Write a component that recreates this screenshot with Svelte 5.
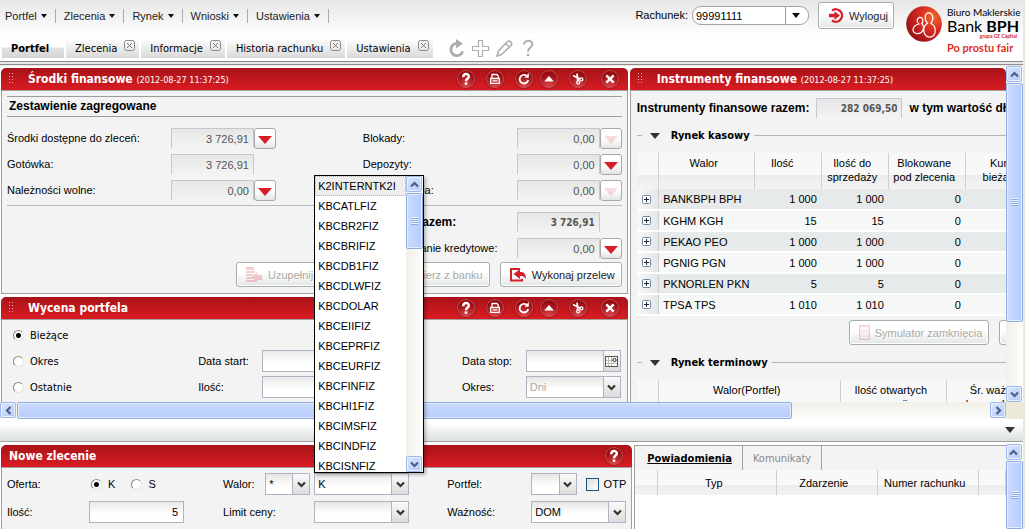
<script lang="ts">
	const menu = ['Portfel', 'Zlecenia', 'Rynek', 'Wnioski', 'Ustawienia']
	const tabs = ['Portfel', 'Zlecenia', 'Informacje', 'Historia rachunku', 'Ustawienia']
	let activeTab = $state('Portfel')

	const panelTools = [
		{ icon: 'help', label: 'Pomoc' },
		{ icon: 'print', label: 'Drukuj' },
		{ icon: 'refresh', label: 'Odśwież' },
		{ icon: 'up', label: 'Zwiń' },
		{ icon: 'cut', label: 'Odepnij' },
		{ icon: 'close', label: 'Zamknij' },
	]

	const funds = [
		{ id: 'srodki', label: 'Środki dostępne do zleceń:', value: '3 726,91', more: true, off: false },
		{ id: 'blokady', label: 'Blokady:', value: '0,00', more: true, off: true },
		{ id: 'gotowka', label: 'Gotówka:', value: '3 726,91', more: false, off: false },
		{ id: 'depozyty', label: 'Depozyty:', value: '0,00', more: true, off: false },
		{ id: 'naleznosci', label: 'Należności wolne:', value: '0,00', more: true, off: false },
		{ id: 'zobowiazania', label: 'Zobowiązania:', value: '0,00', more: true, off: true },
	]

	const positions = [
		['BANKBPH BPH', '1 000', '1 000', '0'],
		['KGHM KGH', '15', '15', '0'],
		['PEKAO PEO', '1 000', '1 000', '0'],
		['PGNIG PGN', '1 000', '1 000', '0'],
		['PKNORLEN PKN', '5', '5', '0'],
		['TPSA TPS', '1 010', '1 010', '0'],
	]

	const symbols = [
		'K2INTERNTK2I', 'KBCATLFIZ', 'KBCBR2FIZ', 'KBCBRIFIZ', 'KBCDB1FIZ',
		'KBCDLWFIZ', 'KBCDOLAR', 'KBCEIIFIZ', 'KBCEPRFIZ', 'KBCEURFIZ',
		'KBCFINFIZ', 'KBCHI1FIZ', 'KBCIMSFIZ', 'KBCINDFIZ', 'KBCISNFIZ',
	]

	let valuation = $state('Bieżące')
	let side = $state('K')
	let symbol = $state('K')
</script>

{#snippet chevron(dir)}
	<svg class="chevron {dir}" width="9" height="9" viewBox="0 0 9 9">
		<path d="M1 2.5 L4.5 6 L8 2.5" fill="none" stroke="currentColor" stroke-width="2.2" />
	</svg>
{/snippet}

{#snippet glyph(name)}
	<svg width="18" height="18" viewBox="0 0 18 18" fill="none" stroke="#fff" stroke-width="1.8">
		{#if name === 'help'}
			<path d="M6.2 7.2 C6.2 3 12 3.2 11.8 6.6 C11.7 8.6 9 8.6 9 11.2" stroke-width="2.4" />
			<path d="M9 12.4 V14.8" stroke-width="2.6" />
		{:else if name === 'print'}
			<path d="M6 8 V4.5 H11 L12.2 6 V8 M4.7 8.5 H13.3 V13.3 H4.7 Z M6.5 10.9 H11.5" stroke-width="1.3" />
		{:else if name === 'refresh'}
			<path d="M11.4 5.6 A4.3 4.3 0 1 0 13.2 10" />
			<path d="M9.4 7.8 H13.8 V3 Z" fill="#fff" stroke="none" />
		{:else if name === 'up'}
			<path d="M4.2 11.4 L9 6 L13.8 11.4 Z" fill="#fff" stroke="none" />
		{:else if name === 'cut'}
			<path d="M4 5.5 L11 9 M8 3.6 L8.8 11" stroke-width="1.8" />
			<circle cx="12.4" cy="9.4" r="1.5" stroke-width="1.3" />
			<circle cx="9.2" cy="12.4" r="1.5" stroke-width="1.3" />
		{:else}
			<path d="M5.3 5.3 L12.7 12.7 M12.7 5.3 L5.3 12.7" stroke-width="2.4" />
		{/if}
	</svg>
{/snippet}

{#snippet tools()}
	<div class="tools">
		{#each panelTools as t}
			<button class="tool" aria-label={t.label}>{@render glyph(t.icon)}</button>
		{/each}
	</div>
{/snippet}

{#snippet grip()}
	<svg class="grip" width="6" height="12" viewBox="0 0 6 12" fill="#f0b0b2">
		{#each [0, 3, 6, 9] as y}
			<rect x="0" {y} width="1" height="1" />
			<rect x="3" {y} width="1" height="1" />
		{/each}
	</svg>
{/snippet}

{#snippet stack()}
	<svg width="17" height="16" viewBox="0 0 17 16" fill="#d4202a">
		<path d="M0 0 H8 V3 H0 Z M0 4 H9 V6 H0 Z M0 7 H7 V9 H0 Z M0 10 H8 V12 H0 Z M0 13 H10 V15 H0 Z" />
		<path d="M6 10 L11 5 V8 H16 V13 H11 V15 Z" />
	</svg>
{/snippet}

{#snippet money(id, value, more, off)}
	<div class="money">
		<input {id} class="readout" readonly {value} />
		{#if more}
			<button class="more" disabled={off} aria-label="Szczegóły">
				<svg width="14" height="8" viewBox="0 0 14 8"><path d="M0 0 H14 L7 8 Z" fill="#d81e26" /></svg>
			</button>
		{/if}
	</div>
{/snippet}

{#snippet dropdown(id, label, value, width, off)}
	<div class="dropdown {width}">
		<select {id} aria-label={label} disabled={off}><option>{value}</option></select>
		<span class="arrow">{@render chevron('down')}</span>
	</div>
{/snippet}

<div class="app">
	<header>
		<div class="nav">
			<nav class="menu">
				{#each menu as item}
					<a href="#menu">{item}<i></i></a>
				{/each}
			</nav>
			<div class="tabs">
				{#each tabs as tab, n}
					<div class="tab" class:active={tab === activeTab}>
						<button class="tab-name" onclick={() => (activeTab = tab)}>{tab}</button>
						{#if n > 0}
							<button class="tab-close" aria-label="Zamknij {tab}">
								<svg width="11" height="11" viewBox="0 0 11 11" fill="none" stroke="#8a8a8a">
									<rect x="0.5" y="0.5" width="10" height="10" rx="2" />
									<path d="M3 3 L8 8 M8 3 L3 8" stroke="#777" />
								</svg>
							</button>
						{/if}
					</div>
				{/each}
				<svg class="tab-icons" width="88" height="20" viewBox="0 0 88 20" fill="none" stroke="#adadad">
					<path d="M9 4.6 A6 6 0 1 0 14.6 12.4" stroke-width="3" />
					<path d="M8 0 L15 4.6 L8 9.4 Z" fill="#adadad" stroke="none" />
					<path d="M30.5 1.5 h4 v6 h6 v4 h-6 v6 h-4 v-6 h-6 v-4 h6 z" stroke-width="1.2" />
					<path d="M49 17 L50.5 12 L59.5 2.5 Q61 1.2 63 3 Q64.5 5 63 6.5 L53.5 15.5 Z M57.5 4.5 L61.5 8.2 M49 17 l3 -1" stroke-width="1.5" />
					<path d="M76 5.5 C76 0.6 85 0.6 84.3 5.5 C84 8.6 80 8.6 80 12.6" stroke-width="2" />
					<path d="M80 14.8 V17" stroke-width="2.4" />
				</svg>
			</div>
		</div>
		<div class="account">
			<label for="rachunek">Rachunek:</label>
			<div class="pill">
				<select id="rachunek"><option>99991111</option></select>
				<i></i>
			</div>
			<button class="push logout">
				<svg width="15" height="15" viewBox="0 0 15 15" fill="none" stroke="#d4202a">
					<path d="M3 2.6 A6.2 6.2 0 1 1 3 12.4" stroke-width="2.4" />
					<path d="M0 5.8 H5.5 V3.2 L11 7.5 L5.5 11.8 V9.2 H0 Z" fill="#d4202a" stroke="none" />
				</svg>
				Wyloguj
			</button>
			<div class="logo">
				<svg width="36" height="36" viewBox="0 0 36 36">
					<defs>
						<radialGradient id="ball" cx="0.75" cy="0.3" r="0.85">
							<stop offset="0" stop-color="#f0682a" />
							<stop offset="0.45" stop-color="#d92a22" />
							<stop offset="1" stop-color="#8f1018" />
						</radialGradient>
					</defs>
					<circle cx="18" cy="18" r="17.8" fill="url(#ball)" />
					<g fill="none" stroke="#fff" stroke-width="1.2">
						<path d="M13 18 C10.5 16 10.5 12.5 13.5 11.4 C17 11 18 15 15.6 17.6 C19.5 20.5 17 27.5 11.5 27.7 C5.5 27.5 5 20 13 18 Z" />
						<path d="M21.5 17.2 C18.5 14.5 18 8.2 22 6.8 C27.5 6.6 28 13.5 24.8 17.5 C30.5 19.5 31 29.5 24.5 31.2 C17 31.2 15.5 21 21.5 17.2 Z" />
					</g>
				</svg>
				<div class="brand">
					<span class="brand-top">Biuro Maklerskie</span>
					<span class="brand-name">Bank <b>BPH</b></span>
					<span class="brand-group">grupa GE Capital</span>
					<span class="brand-motto">Po prostu fair</span>
				</div>
			</div>
		</div>
	</header>

	<main>
		<div class="canvas">
			<div class="column">
				<section class="panel">
					<div class="bar">
						{@render grip()}
						<h2>Środki finansowe <small>(2012-08-27 11:37:25)</small></h2>
						{@render tools()}
					</div>
					<div class="body">
						<h3 class="caption">Zestawienie zagregowane</h3>
						<div class="fields funds">
							{#each funds as f}
								<label for={f.id}>{f.label}</label>
								{@render money(f.id, f.value, f.more, f.off)}
							{/each}
						</div>
						<div class="fields totals">
							<label class="total" for="razem">Gotówka razem:</label>
							<div class="strong">{@render money('razem', '3 726,91', false, false)}</div>
							<label for="kredyt">Zaangażowanie kredytowe:</label>
							{@render money('kredyt', '0,00', true, false)}
						</div>
						<div class="actions">
							<button class="push" disabled>
								{@render stack()}
								Uzupełnij z banku
							</button>
							<button class="push" disabled>
								{@render stack()}
								Pobierz z banku
							</button>
							<button class="push">
								<svg width="17" height="14" viewBox="0 0 17 14" fill="#d4202a">
									<path d="M10 1 H1 V12.5 H12 V11" fill="none" stroke="#d4202a" stroke-width="2" />
									<path d="M3.5 6 L10 1 V4 H12 Q16 5 16 11 Q14 8 12 8 H10 V11 Z" />
								</svg>
								Wykonaj przelew
							</button>
						</div>
					</div>
				</section>

				<section class="panel">
					<div class="bar">
						{@render grip()}
						<h2>Wycena portfela</h2>
						{@render tools()}
					</div>
					<div class="body valuation">
						<label class="radio"><input type="radio" bind:group={valuation} value="Bieżące" />Bieżące</label>
						<label class="radio start"><input type="radio" bind:group={valuation} value="Okres" />Okres</label>
						<label for="data-start">Data start:</label>
						<input id="data-start" class="text" />
						<label for="data-stop">Data stop:</label>
						<div class="dropdown wide">
							<input id="data-stop" class="text" />
							<button class="arrow" aria-label="Kalendarz">
								<svg width="13" height="11" viewBox="0 0 13 11" fill="none" stroke="#777">
									<rect x="0.5" y="0.5" width="12" height="10" fill="#fff" stroke="#555" />
									<path d="M3.5 1 V10 M6.5 1 V10 M1 4.5 H12 M1 7.5 H12" stroke="#bbb" />
									<circle cx="9.5" cy="4" r="1.6" stroke="#222" fill="#fff" />
								</svg>
							</button>
						</div>
						<label class="radio start"><input type="radio" bind:group={valuation} value="Ostatnie" />Ostatnie</label>
						<label for="ilosc-okres">Ilość:</label>
						<input id="ilosc-okres" class="text" />
						<label for="okres">Okres:</label>
						{@render dropdown('okres', 'Okres', 'Dni', 'wide', true)}
					</div>
				</section>
			</div>

			<section class="panel instruments">
				<div class="bar">
					{@render grip()}
					<h2>Instrumenty finansowe <small>(2012-08-27 11:37:25)</small></h2>
				</div>
				<div class="body">
					<div class="summary">
						<label for="instrumenty">Instrumenty finansowe razem:</label>
						<input id="instrumenty" class="readout" readonly value="282 069,50" />
						<span>w tym wartość długa:</span>
					</div>
					<h3 class="legend"><i></i>Rynek kasowy</h3>
					<table class="cash">
						<colgroup><col class="c-x" /><col class="c-name" /><col class="c-qty" /><col class="c-qty" /><col class="c-blk" /><col class="c-blk" /></colgroup>
						<thead>
							<tr><th></th><th>Walor</th><th class="shift">Ilość</th><th>Ilość do<br />sprzedaży</th><th>Blokowane<br />pod zlecenia</th><th>Kurs<br />bieżący</th></tr>
						</thead>
						<tbody>
							{#each positions as row}
								<tr>
									<td class="expand">
										<button aria-label="Rozwiń {row[0]}">
											<svg width="9" height="9" viewBox="0 0 9 9" fill="none">
												<rect x="0.5" y="0.5" width="8" height="8" rx="1" fill="#fff" stroke="#6f86a8" />
												<path d="M2 4.5 H7 M4.5 2 V7" stroke="#222" />
											</svg>
										</button>
									</td>
									<td>{row[0]}</td>
									<td class="num">{row[1]}</td>
									<td class="num">{row[2]}</td>
									<td class="num">{row[3]}</td>
									<td></td>
								</tr>
							{/each}
						</tbody>
					</table>
					<div class="actions sims">
						<button class="push" disabled>
							<svg width="11" height="15" viewBox="0 0 11 15" fill="none" stroke="#d4202a">
								<rect x="0.5" y="0.5" width="10" height="14" fill="#e9a0a4" />
								<path d="M2 3.5 H9" stroke="#fff" stroke-width="2" />
								<path d="M2 7.5 H9 M2 10 H9 M2 12.5 H9" stroke="#fff" stroke-dasharray="2 1" />
							</svg>
							Symulator zamknięcia
						</button>
						<button class="push" disabled>Zamknij pozycje</button>
					</div>
					<h3 class="legend"><i></i>Rynek terminowy</h3>
					<table class="futures">
						<colgroup><col class="c-x" /><col class="c-long" /><col class="c-open" /><col class="c-open" /></colgroup>
						<thead>
							<tr><th></th><th>Walor(Portfel)</th><th>Ilość otwartych<br />pozycji</th><th>Śr. ważony<br />kurs nabycia</th></tr>
						</thead>
					</table>
				</div>
			</section>
		</div>

		<div class="scroll-y">
			<span class="sb">{@render chevron('up')}</span>
			<span class="thumb thumb-main"><i></i></span>
			<span class="sb end">{@render chevron('down')}</span>
		</div>
		<div class="scroll-x">
			<span class="sb">{@render chevron('left')}</span>
			<span class="thumb thumb-wide"></span>
			<span class="sb end">{@render chevron('right')}</span>
		</div>
	</main>

	<div class="splitter"><i></i></div>

	<footer>
		<section class="panel order">
			<div class="bar">
				<h2>Nowe zlecenie</h2>
				<button class="tool" aria-label="Pomoc">{@render glyph('help')}</button>
			</div>
			<form class="body order-form">
				<span>Oferta:</span>
				<div class="sides">
					<label class="radio"><input type="radio" bind:group={side} value="K" />K</label>
					<label class="radio"><input type="radio" bind:group={side} value="S" />S</label>
				</div>
				<label for="rynek">Walor:</label>
				{@render dropdown('rynek', 'Rynek', '*', 'narrow', false)}
				<div class="dropdown combo">
					<input class="text" aria-label="Symbol waloru" bind:value={symbol} />
					<button type="button" class="arrow" aria-label="Lista walorów">{@render chevron('down')}</button>
					<div class="popup">
						<ul role="listbox" aria-label="Walory">
							{#each symbols as s, n}
								<li role="option" aria-selected={n === 0}>{s}</li>
							{/each}
						</ul>
						<div class="scroll-y">
							<span class="sb">{@render chevron('up')}</span>
							<span class="thumb thumb-list"><i></i></span>
							<span class="sb end">{@render chevron('down')}</span>
						</div>
					</div>
				</div>
				<label for="portfel">Portfel:</label>
				<div class="pair">
					{@render dropdown('portfel', 'Portfel', '', 'small', false)}
					<label class="check"><input type="checkbox" />OTP</label>
				</div>

				<label for="ilosc">Ilość:</label>
				<input id="ilosc" class="text amount" value="5" />
				<label class="limit" for="limit">Limit ceny:</label>
				{@render dropdown('limit', 'Limit ceny', '', 'wide', false)}
				<label for="waznosc">Ważność:</label>
				{@render dropdown('waznosc', 'Ważność', 'DOM', 'wide', false)}
			</form>
		</section>
		<section class="messages">
			<div class="message-box">
				<div class="message-tabs">
					<button class="on">Powiadomienia</button>
					<button>Komunikaty</button>
				</div>
				<table class="inbox">
					<colgroup><col class="c-x" /><col class="c-type" /><col class="c-event" /><col class="c-event" /><col /></colgroup>
					<thead>
						<tr><th></th><th>Typ</th><th>Zdarzenie</th><th>Numer rachunku</th><th></th></tr>
					</thead>
				</table>
			</div>
			<div class="scroll-y">
				<span class="sb">{@render chevron('up')}</span>
				<span class="thumb thumb-rest"><i></i></span>
			</div>
		</section>
	</footer>
</div>

<style>
	:global(body) {
		background: #ece9d8;
		overflow: hidden;
	}
	.app, .app :global(*) {
		box-sizing: border-box;
	}
	.app {
		display: flex;
		flex-direction: column;
		height: 100vh;
		font: 11px/14px "Liberation Sans", Arial, sans-serif;
		color: #000;
	}
	button, input, select {
		font: inherit;
		color: inherit;
		margin: 0;
		padding: 0;
		border: 0;
		border-radius: 0;
		background: none;
	}
	h2, h3, ul {
		margin: 0;
		padding: 0;
	}
	svg {
		display: block;
		flex: none;
	}
	label, span {
		white-space: nowrap;
	}

	/* header */
	header {
		display: flex;
		justify-content: space-between;
		height: 65px;
		margin-right: 2px;
		background: linear-gradient(#e6e6e6, #fff 36px);
		border-bottom: 4px double #8b8b90;
		flex: none;
	}
	.nav {
		display: flex;
		flex-direction: column;
		justify-content: space-between;
		padding: 9px 0 2px 2px;
	}
	.menu {
		display: flex;
	}
	.menu a {
		display: flex;
		align-items: center;
		gap: 4px;
		padding: 0 8px;
		border-right: 1px solid #aaa;
		color: #222;
		text-decoration: none;
	}
	.menu a:first-child {
		padding-left: 3px;
	}
	.menu i, .pill i, .splitter i, .legend i {
		border: 3px solid transparent;
		border-top: 4px solid #111;
		border-bottom: 0;
	}
	.tabs {
		display: flex;
		gap: 2px;
		font: 11px/20px "DejaVu Sans Condensed", Tahoma, sans-serif;
	}
	.tab {
		display: flex;
		align-items: flex-start;
		gap: 7px;
		height: 19px;
		padding: 0 4px 0 9px;
		background: linear-gradient(#fdfdfd, #d9d9d9);
	}
	.tab.active {
		padding: 0 15px 0 9px;
		background: linear-gradient(#fff 8px, #e2e2e2 9px, #d4d4d4);
		font-weight: bold;
	}
	.tab-close {
		padding-top: 1px;
	}
	.tab-icons {
		margin-left: 13px;
	}
	.account {
		display: flex;
		align-items: flex-start;
		padding-top: 2px;
	}
	.account > label {
		padding: 6px 4px 0 0;
	}
	.pill {
		display: flex;
		align-items: center;
		width: 117px;
		height: 19px;
		margin: 4px 9px 0 0;
		padding: 0 8px 0 3px;
		border: 1px solid #a3a3a3;
		border-radius: 9px;
		background: #fff;
	}
	.pill i {
		border-width: 5px 4px 0;
	}
	.pill select {
		appearance: none;
		flex: 1;
		height: 17px;
		margin-right: 6px;
		border-right: 1px solid #999;
		outline: none;
	}
	.push {
		display: flex;
		align-items: center;
		gap: 5px;
		height: 25px;
		padding: 0 6px 0 9px;
		border: 1px solid #a5aeab;
		border-radius: 3px;
		box-shadow: inset 0 0 0 1px #fff;
		background: linear-gradient(#fff 40%, #e2e6e4);
		white-space: nowrap;
		color: #222;
	}
	.push:disabled {
		color: #a9aaa2;
		text-shadow: 1px 1px #fff;
	}
	.push:disabled svg {
		opacity: 0.22;
	}
	.logout {
		height: 27px;
		margin-right: 12px;
		padding: 0 5px 0 10px;
	}
	.logo {
		display: flex;
		gap: 5px;
		padding: 4px 6px 0 0;
	}
	.brand {
		display: flex;
		flex-direction: column;
		font-family: Lato, sans-serif;
		width: 70px;
	}
	.brand-top {
		font-size: 10px;
		line-height: 13px;
	}
	.brand-name {
		font-size: 16px;
		line-height: 14px;
	}
	.brand-group {
		align-self: flex-end;
		font-size: 5px;
		line-height: 7px;
		font-weight: bold;
		color: #d4202a;
	}
	.brand-motto {
		font-size: 11px;
		line-height: 15px;
		font-weight: bold;
		color: #e03026;
	}

	/* workspace */
	main {
		display: grid;
		grid-template: minmax(0, 1fr) 17px / minmax(0, 1fr) 17px;
		flex: 1;
		min-height: 0;
		margin-right: 2px;
		padding-top: 1px;
	}
	.canvas {
		display: grid;
		grid-template-columns: 5fr 3fr;
		align-items: start;
		overflow: hidden;
		padding-top: 2px;
		background: #fff;
	}
	.column {
		display: flex;
		flex-direction: column;
		gap: 3px;
		min-width: 0;
		padding: 0 1px;
	}
	.instruments {
		min-width: 0;
		margin-left: 1px;
	}
	.bar {
		display: flex;
		align-items: center;
		height: 22px;
		padding: 0 9px 0 8px;
		border-radius: 5px 5px 0 0;
		background: linear-gradient(#a81318, #d91c23);
		color: #fff;
	}
	.grip {
		margin-right: 13px;
	}
	h2 {
		flex: 1;
		font: bold 12px/22px "DejaVu Sans Condensed", Tahoma, sans-serif;
		white-space: nowrap;
	}
	h2 small {
		font-size: 9px;
		font-weight: normal;
	}
	.tools {
		display: grid;
		grid-template-columns: 29px 29px 25px 29px 32px 18px;
	}
	.tool {
		width: 18px;
		height: 18px;
		border-radius: 9px;
		background: radial-gradient(circle at 50% 100%, #e8484c, #960c12 70%);
		box-shadow: inset 0 0 0 1px #c4484c, 0 0 1px 1px #a3161b;
	}
	.body {
		border: 1px solid #a0a0a0;
		background: #f3f3f3;
	}
	.column .body {
		padding: 5px 5px 6px;
	}
	.caption {
		padding: 1px 2px 2px;
		border: 1px solid #9c9c9c;
		border-width: 1px 0;
		font-size: 12px;
		line-height: 16px;
	}
	.fields {
		display: grid;
		align-items: center;
		grid-auto-rows: 26px;
	}
	.funds {
		grid-template-columns: 164fr 192fr 154fr 105px;
		padding: 8px 0 2px;
		border-bottom: 1px solid #b9b9c6;
	}
	.totals {
		grid-template-columns: 154fr 105px;
		padding: 3px 0 1px;
		margin-left: 58%;
	}
	.total {
		font-size: 12px;
		font-weight: bold;
	}
	.money {
		display: flex;
		align-items: center;
	}
	.readout {
		width: 83px;
		height: 20px;
		padding: 0 4px;
		border: 1px solid #c3c6d3;
		border-bottom: 0;
		background: linear-gradient(#e6e6e6, #f4f4f4);
		color: #555;
		text-align: right;
	}
	.strong .readout, .summary .readout {
		font: bold 10px "DejaVu Sans Condensed", Tahoma, sans-serif;
	}
	.more {
		display: flex;
		align-items: center;
		justify-content: center;
		width: 22px;
		height: 21px;
		padding-top: 4px;
		border: 1px solid #a8a8a8;
		border-radius: 3px;
		background: linear-gradient(#fff 50%, #e3e5e4);
	}
	.more:disabled svg {
		opacity: 0.15;
	}
	.actions {
		display: flex;
		justify-content: flex-end;
		gap: 10px;
	}

	.column .valuation {
		display: grid;
		grid-template-columns: 191fr 64fr 201fr 64fr 95px;
		grid-auto-rows: 26px;
		align-items: center;
		padding: 2px 6px;
	}
	.radio {
		display: flex;
		align-items: center;
		gap: 6px;
	}
	.valuation .radio {
		grid-column: 1;
		padding-left: 5px;
		font: 11px "DejaVu Sans Condensed", Tahoma, sans-serif;
	}
	.radio input {
		appearance: none;
		width: 11px;
		height: 11px;
		border: 1px solid #8b897c;
		border-right-color: #e5e3d8;
		border-bottom-color: #e5e3d8;
		border-radius: 50%;
		background: #fff;
	}
	.radio input:checked {
		background: radial-gradient(#000 2px, #fff 3px);
	}
	.text {
		width: 95px;
		height: 22px;
		padding: 0 5px;
		border: 1px solid #b0b3c4;
		background: linear-gradient(#e9e9e9, #fff 60%);
		outline: none;
	}
	.dropdown {
		display: grid;
		grid-template-columns: minmax(0, 1fr) 17px;
		height: 22px;
		border: 1px solid #b0b3c4;
		background: linear-gradient(#e6e6e6, #fff 60%);
	}
	.dropdown.wide, .dropdown.combo {
		width: 95px;
	}
	.dropdown.narrow {
		width: 45px;
	}
	.dropdown.small {
		width: 47px;
	}
	.dropdown select, .dropdown .text {
		appearance: none;
		width: 100%;
		height: 20px;
		padding: 0 3px;
		border: 0;
		background: none;
		outline: none;
	}
	.dropdown select:disabled {
		color: #aaa;
		opacity: 1;
	}
	.arrow {
		display: flex;
		align-items: center;
		justify-content: center;
		border-left: 1px solid #b0b3c4;
		background: linear-gradient(#fafafa, #dcdcdc);
		color: #333;
		pointer-events: none;
	}

	/* instruments */
	.instruments .body {
		padding: 6px 0 0 6px;
		border-right: 0;
		overflow: hidden;
	}
	.summary {
		display: flex;
		align-items: center;
		gap: 7px;
		height: 21px;
		font-size: 12px;
		font-weight: bold;
		white-space: nowrap;
	}
	.summary .readout {
		width: 86px;
		flex: none;
	}
	.legend {
		display: flex;
		align-items: center;
		height: 35px;
		font: bold 11px "DejaVu Sans Condensed", Tahoma, sans-serif;
		white-space: nowrap;
	}
	.legend::before, .legend::after {
		content: "";
		width: 5px;
		height: 1px;
		background: #b3b3c0;
	}
	.legend::after {
		flex: 1;
		margin-left: 4px;
	}
	.legend i, .splitter i {
		margin: 0 11px 0 8px;
		border-width: 6px 5px 0;
		border-top-color: #333;
	}
	table {
		table-layout: fixed;
		width: 100%;
		border-collapse: collapse;
	}
	.cash {
		width: 406px;
	}
	.futures {
		width: 416px;
	}
	.c-x { width: 22px; }
	.c-name { width: 96px; }
	.c-qty { width: 67px; }
	.c-blk { width: 77px; }
	.c-long { width: 182px; }
	.c-open { width: 106px; }
	.c-type { width: 119px; }
	.c-event { width: 101px; }
	th {
		height: 36px;
		padding: 3px 6px 0 0;
		border-right: 1px solid #cfcfcf;
		background: linear-gradient(#f8f8f8 60%, #ececee 62%, #f3f3f3);
		font-weight: normal;
		vertical-align: top;
		white-space: nowrap;
	}
	th.shift {
		padding-right: 12px;
	}
	td {
		height: 21px;
		padding: 0 5px 0 4px;
		border-bottom: 2px solid #fff;
		background: #e6eaea;
		white-space: nowrap;
	}
	tr:nth-child(even) td {
		background: #f6f8f7;
	}
	.num {
		text-align: right;
	}
	td.expand, tr:nth-child(even) td.expand {
		padding: 0 0 0 5px;
		border-right: 1px solid #cfcfcf;
		background: linear-gradient(90deg, #f8f8f8, #e4e6e8);
	}
	.expand button {
		display: block;
	}
	.sims {
		justify-content: flex-start;
		margin: 4px 0 0 212px;
	}

	/* scrollbars */
	.scroll-y, .scroll-x {
		display: flex;
		gap: 1px;
		background: linear-gradient(90deg, #f0efe8, #fefefb);
	}
	.scroll-y {
		flex-direction: column;
		width: 17px;
	}
	.scroll-x {
		background: linear-gradient(#f0efe8, #fefefb);
	}
	.sb {
		display: flex;
		align-items: center;
		justify-content: center;
		flex: none;
		width: 16px;
		height: 16px;
		border: 1px solid #9db8ee;
		border-radius: 2px;
		box-shadow: inset 0 0 0 1px #e8f0ff;
		background: linear-gradient(135deg, #dbe6ff, #b4c9f8);
		color: #48608a;
	}
	.sb.end {
		margin-top: auto;
	}
	.scroll-x .sb.end {
		margin: 0 0 0 auto;
	}
	.chevron.up { transform: rotate(180deg); }
	.chevron.left { transform: rotate(90deg); }
	.chevron.right { transform: rotate(-90deg); }
	.thumb {
		display: flex;
		align-items: center;
		justify-content: center;
		border: 1px solid #8fabe4;
		border-radius: 2px;
		box-shadow: inset 0 0 0 1px #e4ecff;
		background: linear-gradient(90deg, #cbdbff, #b6cbfa);
	}
	.thumb i {
		width: 7px;
		height: 8px;
		background: repeating-linear-gradient(#eef4ff 0 1px, #8caae6 1px 2px);
	}
	.thumb-main { height: 71%; }
	.thumb-rest { flex: 1; }
	.thumb-list { height: 56px; }
	.thumb-wide {
		width: 77%;
		background: linear-gradient(#cbdbff, #b6cbfa);
	}

	.splitter {
		display: flex;
		align-items: center;
		justify-content: flex-end;
		flex: none;
		height: 23px;
		margin-right: 2px;
		border-bottom: 1px solid #a0a0a0;
		background: linear-gradient(#fff 20%, #dadedc);
	}
	.splitter i {
		margin: 0 8px 0 0;
	}

	/* order dock */
	footer {
		display: grid;
		grid-template-columns: 62fr 38fr;
		flex: none;
		height: 87px;
		margin-right: 2px;
		background: #fff;
	}
	.order {
		display: flex;
		flex-direction: column;
		margin: 3px 2px 0 1px;
	}
	.order .bar {
		flex: none;
	}
	.order-form {
		display: grid;
		grid-template-columns: 82fr 134fr 42fr 49px 133fr 84fr 95px;
		grid-auto-rows: 28px;
		align-items: center;
		flex: 1;
		padding: 2px 5px 0;
		border-bottom: 0;
	}
	.sides {
		display: flex;
		gap: 16px;
		padding-left: 2px;
	}
	.pair {
		display: flex;
		gap: 9px;
	}
	.check {
		display: flex;
		align-items: center;
		gap: 5px;
	}
	.check input {
		appearance: none;
		width: 13px;
		height: 13px;
		border: 1px solid #1d5180;
		background: linear-gradient(135deg, #dcdcd7, #fff);
	}
	.amount {
		text-align: right;
	}
	.limit {
		grid-column: 3 / 5;
	}
	.combo {
		position: relative;
	}
	.popup {
		position: absolute;
		left: -1px;
		bottom: 21px;
		z-index: 5;
		display: flex;
		width: 110px;
		height: 298px;
		border: 1px solid #000;
		background: #fff;
		box-shadow: 2px 2px 3px rgba(0, 0, 0, 0.25);
	}
	.popup ul {
		flex: 1;
		overflow: hidden;
		list-style: none;
	}
	.popup li {
		height: 20px;
		padding: 0 3px;
		line-height: 20px;
	}
	.popup li[aria-selected="true"] {
		border: 1px dotted #a8b4d8;
		padding: 0 2px;
		line-height: 18px;
		background: #eee;
	}
	.messages {
		display: flex;
		min-width: 0;
	}
	.message-box {
		flex: 1;
		min-width: 0;
		margin-top: 3px;
		border: 1px solid #a0a0a0;
		border-width: 1px 0 0 1px;
	}
	.messages .scroll-y {
		margin-top: 2px;
	}
	.message-tabs {
		display: flex;
		height: 24px;
		background: #f3f3f3;
		font: 11px "DejaVu Sans Condensed", Tahoma, sans-serif;
	}
	.message-tabs button {
		padding: 0 10px;
		border-right: 1px solid #a0a0a0;
		color: #888;
	}
	.message-tabs .on {
		padding-left: 12px;
		font-weight: bold;
		text-decoration: underline;
		color: #000;
	}
	.inbox th {
		height: 25px;
		padding-top: 0;
		vertical-align: middle;
	}
</style>
